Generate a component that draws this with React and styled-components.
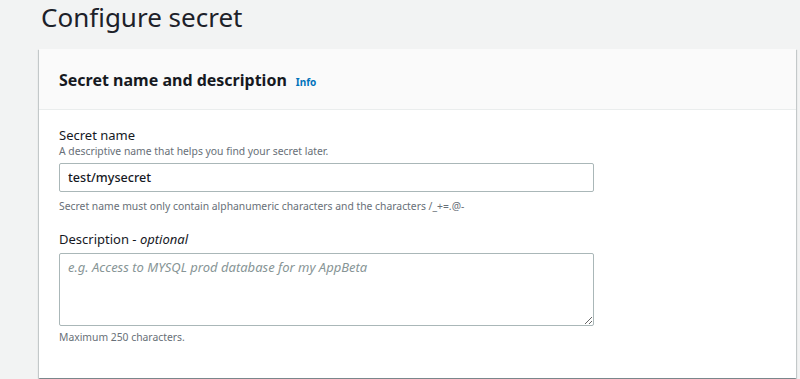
import React from 'react';
import styled, { createGlobalStyle } from 'styled-components';

const GlobalStyle = createGlobalStyle`
  html, body {
    margin: 0;
    padding: 0;
    background: #f2f3f3;
    font-family: 'Noto Sans', 'Open Sans', sans-serif;
    color: #16191f;
  }
`;

const PageStyled = styled.div`
  padding: 0 4px 0 39px;
  height: 379px;
  overflow: hidden;
`;

const TitleStyled = styled.h1`
  margin: 0;
  padding: 0 0 0 2px;
  height: 49px;
  box-sizing: border-box;
  font-size: 26px;
  font-weight: 400;
  line-height: 34px;
  color: #1d2129;
`;

const CardStyled = styled.section`
  background: #ffffff;
  height: 329px;
  box-shadow: 0 1px 1px 0 rgba(0, 28, 36, 0.3), 1px 1px 1px 0 rgba(0, 28, 36, 0.15),
    -1px 1px 1px 0 rgba(0, 28, 36, 0.15);
`;

const CardHeaderStyled = styled.header`
  display: flex;
  align-items: baseline;
  gap: 9px;
  height: 61px;
  box-sizing: border-box;
  padding: 21px 20px 0;
  background: #fafafa;
  border-bottom: 1px solid #eaeded;
`;

const CardTitleStyled = styled.h2`
  margin: 0;
  font-size: 16px;
  font-weight: 700;
  line-height: 20px;
`;

const InfoLinkStyled = styled.a`
  font-size: 10px;
  font-weight: 700;
  color: #0073bb;
  text-decoration: none;
`;

const CardBodyStyled = styled.div`
  padding: 16px 20px 0;
`;

const FieldStyled = styled.div`
  margin-bottom: ${(p) => p.spacing || 0}px;
`;

const LabelStyled = styled.label`
  display: block;
  font-size: 13px;
  line-height: 18px;
  color: #16191f;

  em {
    font-style: italic;
  }
`;

const HintStyled = styled.div`
  font-size: 10.35px;
  line-height: 14px;
  color: #687078;
  margin-top: ${(p) => p.top || 0}px;
`;

const InputStyled = styled.input`
  display: block;
  box-sizing: border-box;
  width: 535px;
  height: 29px;
  margin-top: 5px;
  padding: 0 8px;
  border: 1px solid #aab7b8;
  border-radius: 2px;
  font-family: inherit;
  font-size: 12.6px;
  font-weight: 500;
  color: #16191f;
  background: #ffffff;
  outline: none;
`;

const TextAreaStyled = styled.textarea`
  display: block;
  box-sizing: border-box;
  width: 535px;
  height: 73px;
  margin-top: 5px;
  padding: 3px 8px;
  border: 1px solid #aab7b8;
  border-radius: 2px;
  font-family: inherit;
  font-size: 13px;
  line-height: 20px;
  color: #16191f;
  background: #ffffff;
  outline: none;
  resize: vertical;

  &::placeholder {
    color: #879596;
    font-style: italic;
  }
`;

const App = () => (
  <>
    <GlobalStyle />
    <PageStyled>
      <TitleStyled>Configure secret</TitleStyled>
      <CardStyled>
        <CardHeaderStyled>
          <CardTitleStyled>Secret name and description</CardTitleStyled>
          <InfoLinkStyled href="#">Info</InfoLinkStyled>
        </CardHeaderStyled>
        <CardBodyStyled>
          <FieldStyled spacing={17}>
            <LabelStyled>Secret name</LabelStyled>
            <HintStyled>A descriptive name that helps you find your secret later.</HintStyled>
            <InputStyled defaultValue="test/mysecret" />
            <HintStyled top={7}>
              Secret name must only contain alphanumeric characters and the characters /_+=.@-
            </HintStyled>
          </FieldStyled>
          <FieldStyled>
            <LabelStyled>
              Description - <em>optional</em>
            </LabelStyled>
            <TextAreaStyled placeholder="e.g. Access to MYSQL prod database for my AppBeta" />
            <HintStyled top={4}>Maximum 250 characters.</HintStyled>
          </FieldStyled>
        </CardBodyStyled>
      </CardStyled>
    </PageStyled>
  </>
);

export default App;
